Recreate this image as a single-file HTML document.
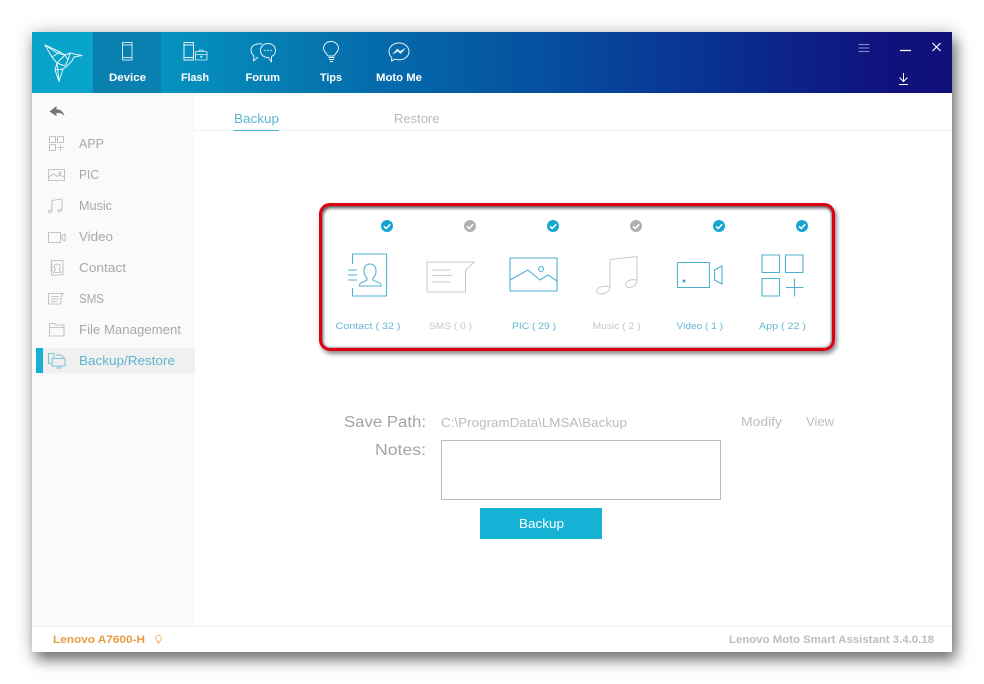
<!DOCTYPE html>
<html>
<head>
<meta charset="utf-8">
<style>
html,body{margin:0;padding:0;width:984px;height:684px;overflow:hidden;background:#fff}
#win{position:absolute;left:32px;top:32px;width:920px;height:620px;background:#fff;box-shadow:4px 8px 13px rgba(0,0,0,.5),0 0 18px rgba(0,0,0,.2)}
#head{position:absolute;left:32px;top:32px;width:920px;height:61px;background:linear-gradient(90deg,#09a3ca 0%,#0592bf 15%,#0577b0 30%,#0560a6 45%,#07459a 62%,#0a2a8e 78%,#0f137e 92%,#10107a 100%)}
#logo{position:absolute;left:32px;top:32px;width:61px;height:61px;background:#08a3c9}
#dev{position:absolute;left:93px;top:32px;width:68px;height:61px;background:#0a80b0}
#side{position:absolute;left:32px;top:93px;width:163px;height:533px;background:#fafafa}
#sel{position:absolute;left:36px;top:348px;width:159px;height:25px;background:#f0f0f0}
#bar{position:absolute;left:36px;top:348px;width:7px;height:25px;background:#15b2d6}
#foot{position:absolute;left:32px;top:626px;width:920px;height:26px;background:#fff;border-top:1px solid #f0f0f0;box-sizing:border-box}
#red{position:absolute;left:319px;top:203px;width:516px;height:148px;box-sizing:border-box;border:3px solid #dd0010;border-radius:11px;box-shadow:2px 3px 4px rgba(0,0,0,.45),inset 1px 2px 3px rgba(0,0,0,.7),inset -1px -1px 2px rgba(0,0,0,.35)}
#note{position:absolute;left:441px;top:440px;width:280px;height:60px;box-sizing:border-box;border:1px solid #bbb;background:#fff}
#btn{position:absolute;left:480px;top:508px;width:122px;height:31px;background:#15b2d6}
svg{position:absolute;left:0;top:0;filter:blur(.3px)}
text{font-family:"Liberation Sans",sans-serif}
</style>
</head>
<body>
<div id="win"></div>
<div id="head"></div>
<div id="logo"></div>
<div id="dev"></div>
<div id="side"></div>
<div id="sel"></div>
<div id="bar"></div>
<div id="foot"></div>
<div id="red"></div>
<div id="note"></div>
<div id="btn"></div>
<svg width="984" height="684" viewBox="0 0 984 684" fill="none">
  <!-- header icons -->
  <g stroke="#e4f4f9" stroke-width="1" stroke-linejoin="round">
    <path d="M45 45L60 52L65 55L70 53L74 54L82 55.500L74 57L72 61L66 67L63 69L59 81.500L55 70L57 63L52 57ZM45 45L57 53L65 55M52 57L60 52M57 63L65 55L68 60L65 66L57 63M55 70L63 69M57 63L59 81.500M70 53L68 60"/>
    <path d="M122.500 42.500h9.500v17.500h-9.500zM122.500 45h9.500M122.500 57.500h9.500" stroke="#c4e6f1"/>
    <path d="M184 42.500h9.500v17.500h-9.500zM184 45h9.500M184 57.500h9.500"/>
    <path d="M195.500 51.500h11.500v8.500h-11.500zM195.500 54.500h11.500M199.500 51.500v-1.500h3.500v1.500M201.200 55.500v2.500M200 56.800h2.500" stroke-width=".8"/>
    <path d="M262 44c-6-1-11 2-11 6c0 2.500 1 4.500 3 6l-.5 5l4.500-4"/>
    <path d="M268 43.500c-4.500 0-7.500 3-7.500 7c0 4 3 7 7.500 7h.5l3 4.500v-5.500c2.500-1 4-3.500 4-6c0-4-3-7-7.500-7z"/>
    <path d="M331 41.500c-4.200 0-7.500 3-7.500 6.800c0 3 3 5 4.500 7.700h6c1.500-2.700 4.500-4.700 4.500-7.700c0-3.800-3.300-6.800-7.500-6.800zM328.500 57.500h6M329 59.500h5M330 61.500h3"/>
    <path d="M399 43c-5.500 0-10 3.500-10 8.500c0 2.500 1 4.500 2.800 6l-.3 3.500l3.400-1.800c1.300.4 2.700.6 4.100.6c5.500 0 10-3.600 10-8.300s-4.500-8.500-10-8.500z"/>
    <path d="M393 54l4.500-5l2.500 2.500l5-3l-4.500 5l-2.500-2.500z" fill="#e4f4f9" stroke-width=".6"/>
  </g>
  <g fill="#e4f4f9"><circle cx="265" cy="50.500" r=".7"/><circle cx="268" cy="50.500" r=".7"/><circle cx="271" cy="50.500" r=".7"/></g>
  <g fill="#fff" font-weight="700" font-size="11px">
    <text x="109" y="81" textLength="37" lengthAdjust="spacingAndGlyphs">Device</text>
    <text x="181" y="81" textLength="28" lengthAdjust="spacingAndGlyphs">Flash</text>
    <text x="245.500" y="81" textLength="34.500" lengthAdjust="spacingAndGlyphs">Forum</text>
    <text x="320" y="81" textLength="22" lengthAdjust="spacingAndGlyphs">Tips</text>
    <text x="376" y="81" textLength="46" lengthAdjust="spacingAndGlyphs">Moto Me</text>
  </g>
  <!-- window controls -->
  <g stroke="#8a8fc8" stroke-width="1"><path d="M858.500 44.500h11M858.500 48h11M858.500 51.500h11"/></g>
  <g stroke="#fff" stroke-width="1.200"><path d="M900 50.500h11M932.500 43l8 8M940.500 43l-8 8"/><path d="M903.500 73v8.500M899.500 77.500l4 4l4-4M899 84.500h9" stroke-width="1"/></g>
  <!-- tabs -->
  <path d="M195 130.500h757" stroke="#eeeeee"/>
  <path d="M234 130.500h45" stroke="#3fb3cf"/>
  <text x="234" y="123" font-size="13px" fill="#5db5cf" textLength="45" lengthAdjust="spacingAndGlyphs">Backup</text>
  <text x="394" y="123" font-size="13px" fill="#b9b9b9" textLength="45.500" lengthAdjust="spacingAndGlyphs">Restore</text>
  <!-- sidebar -->
  <path d="M49.500 111.500l7-5.500v3.200c4 0 7 2.300 8 7.300c-2-3-4.500-3.700-8-3.600v3.400z" fill="#777"/>
  <g stroke="#b6b6b6" stroke-width=".8">
    <path d="M49.500 136.500h6v6h-6zM57.500 136.500h6v6h-6zM49.500 144.500h6v6h-6zM57.500 147.500h6.500M60.700 144.500v6.500"/>
    <path d="M48.500 169.500h16v11h-16zM48.500 177l5-3l4 2.500l2.500-1.500l4.500 2.500"/><circle cx="60" cy="173" r="1"/>
    <path d="M52 200.500l10-1.500v11M52 200.500v10.500" /><path d="M52 211c-1-1.500-4-.5-4 1c0 1 3 1 4-1M62 210c-1-1.500-4-.5-4 1c0 1 3 1 4-1"/>
    <path d="M48.500 232.500h12v10h-12zM62 235.500l3-1.500v7l-3-1.500z"/>
    <path d="M51.500 260.500h11.500v14.500h-11.500zM50 265h3M50 267.500h3M50 270h3M53.500 272.500c0-1.500 2-1.500 2-3c-2.500-3-.5-5.500 1.800-5.500s4.200 2.500 1.800 5.500c0 1.500 2 1.500 2 3z"/>
    <path d="M48.500 293.500h15l-2.500 2.500v8h-12.500zM51 296.500h8M51 299h8M51 301.500h6"/>
    <path d="M49.500 323.500h5l1 1.500h8.500v11h-14.500zM49.500 327.500h14.500"/>
  </g>
  <g stroke="#5db5cf" stroke-width=".8">
    <path d="M52 358.500h13v7.500h-13zM56 368h6M59 366v2M48.500 353.500h5.500v4M48.500 353.500v10h3M56 355h5l2 2v1"/>
  </g>
  <g fill="#a8a8a8" font-size="12.500px">
    <text x="79" y="148" textLength="25" lengthAdjust="spacingAndGlyphs">APP</text>
    <text x="79" y="179" textLength="20" lengthAdjust="spacingAndGlyphs">PIC</text>
    <text x="79" y="210" textLength="33" lengthAdjust="spacingAndGlyphs">Music</text>
    <text x="79" y="241" textLength="34" lengthAdjust="spacingAndGlyphs">Video</text>
    <text x="79" y="272" textLength="47" lengthAdjust="spacingAndGlyphs">Contact</text>
    <text x="79" y="303" textLength="25" lengthAdjust="spacingAndGlyphs">SMS</text>
    <text x="79" y="334" textLength="102" lengthAdjust="spacingAndGlyphs">File Management</text>
    <text x="79" y="365" textLength="96" lengthAdjust="spacingAndGlyphs" fill="#5db5cf">Backup/Restore</text>
  </g>
  <!-- check marks -->
  <g>
    <circle cx="387" cy="226" r="6" fill="#15a6d0"/><circle cx="470" cy="226" r="6" fill="#b0b0b0"/><circle cx="553" cy="226" r="6" fill="#15a6d0"/><circle cx="636" cy="226" r="6" fill="#b0b0b0"/><circle cx="719" cy="226" r="6" fill="#15a6d0"/><circle cx="802" cy="226" r="6" fill="#15a6d0"/>
    <path d="M384 226.300l2.200 2.200l4-4.200M467 226.300l2.200 2.200l4-4.200M550 226.300l2.200 2.200l4-4.200M633 226.300l2.200 2.200l4-4.200M716 226.300l2.200 2.200l4-4.200M799 226.300l2.200 2.200l4-4.200" stroke="#fff" stroke-width="1.500"/>
  </g>
  <!-- feature icons -->
  <g stroke="#4fb0d0" stroke-width="1.100">
    <path d="M352.500 264v-10h34v42h-34v-8"/>
    <path d="M348 270h9M348 275h9M348 280h9"/>
    <path d="M359.500 286v-1.500c0-2 6.500-3 7.500-4.500v-2c-2-1.500-3-4-3-7.500c0-4 2.500-6.500 6-6.500s6 2.500 6 6.500c0 3.500-1 6-3 7.500v2c1 1.500 8 2.500 8 4.500v1.500z"/>
    <path d="M510 258h47v33h-47zM510 280l18-10l12 10l8-5l9 6"/><circle cx="541" cy="269" r="2.500"/>
    <path d="M677.500 262.500h32v25h-32zM714.500 270l7.500-4v18l-7.500-4z"/>
    <path d="M762 255h17.500v17.500h-17.500zM785.500 255h17.500v17.500h-17.500zM762 278.500h17.500v17.500h-17.500zM786 287.500h17.500M794.500 278.500v18"/>
  </g>
  <circle cx="684" cy="281" r="1.500" fill="#3fa8c8"/>
  <g stroke="#c9c9c9" stroke-width="1">
    <path d="M427 262h47l-8.500 8.500v21.500h-38.500zM432 270h18M432 275.500h20M432 282h18"/>
    <path d="M610 259.500l27-3v24c0 4-4 7-8 7c-3 0-4-2-3-4c1-3 7-5 11-3M610 259.500v28c0 3-4 6-8 6.500c-4 .5-6-1.500-5-4c1-3 8-5 13-3"/>
  </g>
  <!-- labels -->
  <g font-size="9.500px" fill="#62b8d4">
    <text x="335.500" y="329" textLength="65" lengthAdjust="spacingAndGlyphs">Contact ( 32 )</text>
    <text x="429" y="329" textLength="43" lengthAdjust="spacingAndGlyphs" fill="#c6c6c6">SMS ( 0 )</text>
    <text x="512" y="329" textLength="44" lengthAdjust="spacingAndGlyphs">PIC ( 29 )</text>
    <text x="592.500" y="329" textLength="48" lengthAdjust="spacingAndGlyphs" fill="#c6c6c6">Music ( 2 )</text>
    <text x="676.500" y="329" textLength="46.500" lengthAdjust="spacingAndGlyphs">Video ( 1 )</text>
    <text x="759" y="329" textLength="47" lengthAdjust="spacingAndGlyphs">App ( 22 )</text>
  </g>
  <!-- form -->
  <text x="344" y="427" font-size="15.500px" fill="#a4a4a4" textLength="82" lengthAdjust="spacingAndGlyphs">Save Path:</text>
  <text x="375" y="455" font-size="15.500px" fill="#a4a4a4" textLength="51" lengthAdjust="spacingAndGlyphs">Notes:</text>
  <text x="441" y="427" font-size="13px" fill="#bcbcbc" textLength="186" lengthAdjust="spacingAndGlyphs">C:\ProgramData\LMSA\Backup</text>
  <text x="741" y="426" font-size="12.500px" fill="#bcbcbc" textLength="41" lengthAdjust="spacingAndGlyphs">Modify</text>
  <text x="806" y="426" font-size="12.500px" fill="#bcbcbc" textLength="28" lengthAdjust="spacingAndGlyphs">View</text>
  <text x="519" y="528" font-size="13px" fill="#fff" textLength="45" lengthAdjust="spacingAndGlyphs">Backup</text>
  <!-- footer -->
  <text x="53" y="643" font-size="11px" font-weight="700" fill="#e89c42" textLength="92" lengthAdjust="spacingAndGlyphs">Lenovo A7600-H</text>
  <path d="M158.500 635.500c-1.800 0-3 1.200-3 2.600c0 1.300 1.200 2.200 1.800 3.200h2.400c.6-1 1.800-1.900 1.800-3.200c0-1.400-1.200-2.600-3-2.600zM157.500 642.500h2.200M158.500 642.500v1.800" stroke="#ecb36c" stroke-width=".9"/>
  <text x="729" y="643" font-size="11px" font-weight="700" fill="#bdbdbd" textLength="205" lengthAdjust="spacingAndGlyphs">Lenovo Moto Smart Assistant  3.4.0.18</text>
</svg>
</body>
</html>
